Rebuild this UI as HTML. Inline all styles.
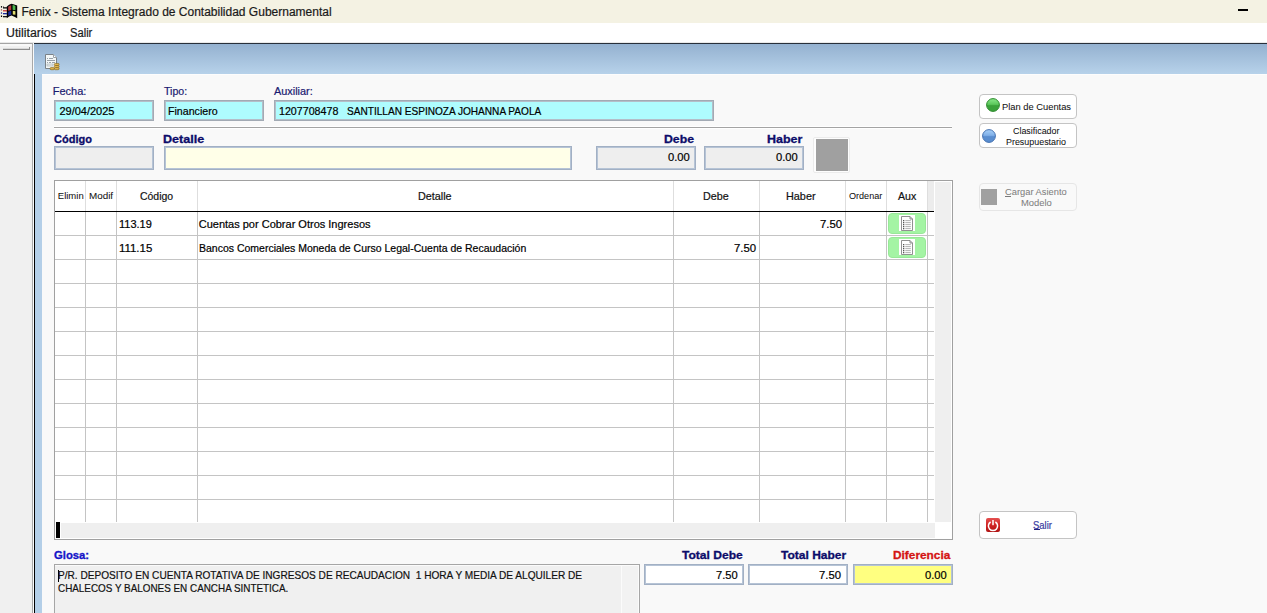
<!DOCTYPE html>
<html><head><meta charset="utf-8">
<style>
*{margin:0;padding:0;box-sizing:border-box}
html,body{width:1267px;height:613px;overflow:hidden;background:#f9f9f9;font-family:"Liberation Sans",sans-serif;color:#000}
.a{position:absolute}
.t{position:absolute;white-space:pre;line-height:1;transform-origin:0 0;-webkit-text-stroke:0.2px currentColor}
svg{position:absolute}
</style></head><body>
<div class="a" style="left:0px;top:0px;width:1267px;height:23px;background:#f4f2e3;"></div>
<div class="a" style="left:0px;top:23px;width:1267px;height:19px;background:#ffffff;"></div>
<div class="a" style="left:0px;top:42px;width:1267px;height:1px;background:#e9e9e9;"></div>
<div class="a" style="left:0px;top:43px;width:32px;height:570px;background:#f0f0f0;"></div>
<div class="a" style="left:0px;top:43px;width:33px;height:1px;background:#a4a4a4;"></div>
<div class="a" style="left:0px;top:44px;width:32px;height:2px;background:#f8f8f8;"></div>
<div class="a" style="left:3px;top:49px;width:27px;height:1px;background:#8c8c8c;"></div>
<div class="a" style="left:3px;top:48px;width:26px;height:1px;background:#d8d8d8;"></div>
<div class="a" style="left:29px;top:47px;width:1px;height:3px;background:#8c8c8c;"></div>
<div class="a" style="left:32px;top:43px;width:1px;height:570px;background:#a8a8a8;"></div>
<div class="a" style="left:33px;top:43px;width:1px;height:570px;background:#fafafa;"></div>
<div class="a" style="left:34px;top:43px;width:1233px;height:31px;background:linear-gradient(#93b0cf,#b7d2ea);"></div>
<div class="a" style="left:34px;top:43px;width:1233px;height:1px;background:#28303a;"></div>
<div class="a" style="left:35px;top:74px;width:7px;height:539px;background:#b4cfe8;"></div>
<div class="a" style="left:34px;top:74px;width:1px;height:539px;background:#000;"></div>
<div class="a" style="left:42px;top:74px;width:1225px;height:539px;background:#f9f9f9;"></div>
<div class="a" style="left:42px;top:74px;width:1225px;height:1px;background:#fdfdfd;"></div>
<div class="a" style="left:1238px;top:9px;width:10px;height:2px;background:#000;"></div>
<div class="a" style="left:54px;top:100px;width:100px;height:21px;background:#aefcfe;border:1px solid #a2aab4;box-shadow:inset 0 0 0 1px #b4bec8"></div>
<div class="a" style="left:164px;top:100px;width:100px;height:21px;background:#aefcfe;border:1px solid #a2aab4;box-shadow:inset 0 0 0 1px #b4bec8"></div>
<div class="a" style="left:274px;top:100px;width:440px;height:21px;background:#aefcfe;border:1px solid #a2aab4;box-shadow:inset 0 0 0 1px #b4bec8"></div>
<div class="a" style="left:54px;top:127px;width:898px;height:1px;background:#a4a4a4;"></div>
<div class="a" style="left:54px;top:128px;width:898px;height:1px;background:#ffffff;"></div>
<div class="a" style="left:54px;top:126px;width:898px;height:1px;background:#ffffff;"></div>
<div class="a" style="left:54px;top:146px;width:100px;height:24px;background:#eeeeee;border:1px solid #a2b0c4;box-shadow:inset 0 0 0 1px #b6c4d6"></div>
<div class="a" style="left:164px;top:146px;width:408px;height:24px;background:#ffffe8;border:1px solid #a2b0c4;box-shadow:inset 0 0 0 1px #b6c4d6"></div>
<div class="a" style="left:596px;top:146px;width:100px;height:24px;background:#eeeeee;border:1px solid #a2b0c4;box-shadow:inset 0 0 0 1px #b6c4d6"></div>
<div class="a" style="left:704px;top:146px;width:100px;height:24px;background:#eeeeee;border:1px solid #a2b0c4;box-shadow:inset 0 0 0 1px #b6c4d6"></div>
<div class="a" style="left:813px;top:137px;width:37px;height:36px;background:#fdfdfd;border:1px solid #ebebeb;border-radius:2px"></div>
<div class="a" style="left:816px;top:139px;width:32px;height:32px;background:#a0a0a0;"></div>
<div class="a" style="left:54px;top:180px;width:899px;height:360px;background:#fff;border:1px solid #a0a0a0"></div>
<div class="a" style="left:85px;top:181px;width:1px;height:30px;background:#dedede;"></div>
<div class="a" style="left:116px;top:181px;width:1px;height:30px;background:#dedede;"></div>
<div class="a" style="left:197px;top:181px;width:1px;height:30px;background:#dedede;"></div>
<div class="a" style="left:673px;top:181px;width:1px;height:30px;background:#dedede;"></div>
<div class="a" style="left:759px;top:181px;width:1px;height:30px;background:#dedede;"></div>
<div class="a" style="left:845px;top:181px;width:1px;height:30px;background:#dedede;"></div>
<div class="a" style="left:886px;top:181px;width:1px;height:30px;background:#dedede;"></div>
<div class="a" style="left:927px;top:181px;width:1px;height:30px;background:#dedede;"></div>
<div class="a" style="left:928px;top:181px;width:6px;height:30px;background:#ececec;"></div>
<div class="a" style="left:55px;top:211px;width:879px;height:1px;background:#000;"></div>
<div class="a" style="left:85px;top:212px;width:1px;height:310px;background:#c4c4c4;"></div>
<div class="a" style="left:116px;top:212px;width:1px;height:310px;background:#c4c4c4;"></div>
<div class="a" style="left:197px;top:212px;width:1px;height:310px;background:#c4c4c4;"></div>
<div class="a" style="left:673px;top:212px;width:1px;height:310px;background:#c4c4c4;"></div>
<div class="a" style="left:759px;top:212px;width:1px;height:310px;background:#c4c4c4;"></div>
<div class="a" style="left:845px;top:212px;width:1px;height:310px;background:#c4c4c4;"></div>
<div class="a" style="left:886px;top:212px;width:1px;height:310px;background:#c4c4c4;"></div>
<div class="a" style="left:927px;top:212px;width:1px;height:310px;background:#c4c4c4;"></div>
<div class="a" style="left:55px;top:235px;width:879px;height:1px;background:#c4c4c4;"></div>
<div class="a" style="left:55px;top:259px;width:879px;height:1px;background:#c4c4c4;"></div>
<div class="a" style="left:55px;top:283px;width:879px;height:1px;background:#c4c4c4;"></div>
<div class="a" style="left:55px;top:307px;width:879px;height:1px;background:#c4c4c4;"></div>
<div class="a" style="left:55px;top:331px;width:879px;height:1px;background:#c4c4c4;"></div>
<div class="a" style="left:55px;top:355px;width:879px;height:1px;background:#c4c4c4;"></div>
<div class="a" style="left:55px;top:379px;width:879px;height:1px;background:#c4c4c4;"></div>
<div class="a" style="left:55px;top:403px;width:879px;height:1px;background:#c4c4c4;"></div>
<div class="a" style="left:55px;top:427px;width:879px;height:1px;background:#c4c4c4;"></div>
<div class="a" style="left:55px;top:451px;width:879px;height:1px;background:#c4c4c4;"></div>
<div class="a" style="left:55px;top:475px;width:879px;height:1px;background:#c4c4c4;"></div>
<div class="a" style="left:55px;top:499px;width:879px;height:1px;background:#c4c4c4;"></div>
<div class="a" style="left:935px;top:182px;width:16px;height:340px;background:#efefef;"></div>
<div class="a" style="left:61px;top:523px;width:874px;height:15px;background:#efefef;"></div>
<div class="a" style="left:56px;top:522px;width:4px;height:16px;background:#000;"></div>
<div class="a" style="left:888px;top:213px;width:38px;height:21px;background:#a4f4a4;border:1px solid #98e898;border-radius:4px"></div>
<div class="a" style="left:899px;top:215px;width:16px;height:16px;background:#ffffff;"></div>
<div class="a" style="left:901px;top:216px;width:12px;height:14px;background:#fff;border:1px solid #707070"></div>
<div class="a" style="left:888px;top:237px;width:38px;height:21px;background:#a4f4a4;border:1px solid #98e898;border-radius:4px"></div>
<div class="a" style="left:899px;top:239px;width:16px;height:16px;background:#ffffff;"></div>
<div class="a" style="left:901px;top:240px;width:12px;height:14px;background:#fff;border:1px solid #707070"></div>
<div class="a" style="left:54px;top:564px;width:586px;height:49px;background:#f0f0f0;border:1px solid #a6a6a6;border-bottom:none"></div>
<div class="a" style="left:55px;top:565px;width:584px;height:1px;background:#fbfbfb;"></div>
<div class="a" style="left:621px;top:565px;width:1px;height:48px;background:#fbfbfb;"></div>
<div class="a" style="left:638px;top:565px;width:1px;height:48px;background:#fbfbfb;"></div>
<div class="a" style="left:622px;top:566px;width:16px;height:47px;background:#f2f2f2;"></div>
<div class="a" style="left:58px;top:570px;width:1px;height:12px;background:#000;"></div>
<div class="a" style="left:644px;top:564px;width:100px;height:21px;background:#ffffff;border:1px solid #a2b0c4;box-shadow:inset 0 0 0 1px #b6c4d6"></div>
<div class="a" style="left:748px;top:564px;width:100px;height:21px;background:#ffffff;border:1px solid #a2b0c4;box-shadow:inset 0 0 0 1px #b6c4d6"></div>
<div class="a" style="left:853px;top:564px;width:100px;height:21px;background:#ffff80;border:1px solid #a2b0c4;box-shadow:inset 0 0 0 1px #b6c4d6"></div>
<div class="a" style="left:979px;top:94px;width:98px;height:25px;background:#fff;border:1px solid #c4c4c4;border-radius:4px"></div>
<div class="a" style="left:979px;top:123px;width:98px;height:25px;background:#fff;border:1px solid #c4c4c4;border-radius:4px"></div>
<div class="a" style="left:979px;top:183px;width:98px;height:28px;background:#f9f9f9;border:1px solid #e6e6e6;border-radius:4px"></div>
<div class="a" style="left:979px;top:511px;width:98px;height:28px;background:#fff;border:1px solid #c4c4c4;border-radius:4px"></div>
<div class="a" style="left:1005px;top:196px;width:6px;height:1px;background:#7a7a7a;"></div>
<div class="a" style="left:981px;top:189px;width:16px;height:16px;background:#a0a0a0;"></div>
<div class="a" style="left:1034px;top:529px;width:6px;height:1px;background:#20207a;"></div>
<svg style="left:0;top:0" width="19" height="20" viewBox="0 0 19 20"><path d="M6.8 6.6 Q9 4.6 11.5 3.8 Q14 4.2 17.2 5.6 L17.2 18.2 Q14.5 16.6 11.5 15.6 Q9 16.4 6.8 18.2 Z" fill="#000"/><path d="M8.2 6.8 Q9.6 5.6 11.2 5.2 L11.2 9.9 Q9.6 10.2 8.2 10.8 Z" fill="#b83a3a"/><path d="M12.6 5.0 Q14 5.2 15.4 5.9 L15.4 10.2 Q14 9.8 12.6 9.8 Z" fill="#4cb84c"/><path d="M8.2 11.8 Q9.6 11.1 11.2 10.8 L11.2 15.0 Q9.6 15.2 8.2 15.8 Z" fill="#1a2a9a"/><path d="M12.8 10.8 Q14 10.9 15.4 11.3 L15.4 14.8 Q14 14.4 12.8 14.4 Z" fill="#e0dc70"/><rect x="0.9" y="6.1" width="1.2" height="1.5" fill="#000"/><rect x="0.9" y="9.3" width="1.2" height="1.2" fill="#a04040"/><rect x="0.9" y="12.3" width="1.2" height="1.5" fill="#2a3aa0"/><rect x="0.9" y="15.5" width="1.2" height="1.5" fill="#000"/><path d="M3 7.2 H7 V8.4 H3 Z M3 7 V6.6 H3.8 V7.2 Z" fill="#000"/><rect x="3" y="10.2" width="4" height="1.2" fill="#c02828"/><rect x="3" y="13" width="4" height="1.3" fill="#1a2a9a"/><rect x="3" y="16.1" width="4" height="1.2" fill="#000"/></svg>
<svg style="left:44px;top:53px" width="18" height="18" viewBox="0 0 18 18"><path d="M1.5 1.5 H9.5 L12.5 4.5 V15.5 H1.5 Z" fill="#f4f8f8" stroke="#7a8288" stroke-width="1"/><path d="M9.5 1.5 V4.5 H12.5" fill="#fff" stroke="#9aa2a8" stroke-width="1"/><g fill="#9aa2a8"><rect x="3" y="5" width="1" height="1"/><rect x="5" y="5" width="4" height="1"/><rect x="3" y="7" width="8" height="1"/><rect x="3" y="9" width="1" height="1"/><rect x="5" y="9" width="2" height="1"/><rect x="8" y="9" width="3" height="1"/></g><rect x="3" y="11" width="6" height="2" fill="#e4ecec" stroke="#a4acb0" stroke-width="0.6"/><g fill="#e2b850" stroke="#8a6a20" stroke-width="0.7"><rect x="10.3" y="10.4" width="4.8" height="2.1" rx="1"/><rect x="10.3" y="12.5" width="4.8" height="2.1" rx="1"/><rect x="10.3" y="14.6" width="4.8" height="2.1" rx="1"/><rect x="6" y="14.6" width="4.3" height="2.1" rx="1"/></g></svg>
<svg style="left:899px;top:215px" width="16" height="16" viewBox="0 0 16 16"><rect x="0" y="0" width="16" height="16" fill="#fff"/><path d="M2.5 1.5 H11 L13.5 4 V15.5 H2.5 Z" fill="#fff" stroke="#858585" stroke-width="0.9"/><path d="M11 1.5 V4 H13.5" fill="none" stroke="#858585" stroke-width="0.9"/><g fill="#555"><rect x="4" y="5" width="1.3" height="1.3"/><rect x="4" y="7" width="1.3" height="1.3"/><rect x="4" y="9" width="1.3" height="1.3"/><rect x="4" y="11" width="1.3" height="1.3"/><rect x="4" y="13" width="1.3" height="1.3"/></g><g fill="#a8a8a8"><rect x="6.3" y="5.2" width="5.5" height="0.9"/><rect x="6.3" y="7.2" width="5.5" height="0.9"/><rect x="6.3" y="9.2" width="5.5" height="0.9"/><rect x="6.3" y="11.2" width="5.5" height="0.9"/><rect x="6.3" y="13.2" width="5.5" height="0.9"/></g></svg>
<svg style="left:899px;top:239px" width="16" height="16" viewBox="0 0 16 16"><rect x="0" y="0" width="16" height="16" fill="#fff"/><path d="M2.5 1.5 H11 L13.5 4 V15.5 H2.5 Z" fill="#fff" stroke="#858585" stroke-width="0.9"/><path d="M11 1.5 V4 H13.5" fill="none" stroke="#858585" stroke-width="0.9"/><g fill="#555"><rect x="4" y="5" width="1.3" height="1.3"/><rect x="4" y="7" width="1.3" height="1.3"/><rect x="4" y="9" width="1.3" height="1.3"/><rect x="4" y="11" width="1.3" height="1.3"/><rect x="4" y="13" width="1.3" height="1.3"/></g><g fill="#a8a8a8"><rect x="6.3" y="5.2" width="5.5" height="0.9"/><rect x="6.3" y="7.2" width="5.5" height="0.9"/><rect x="6.3" y="9.2" width="5.5" height="0.9"/><rect x="6.3" y="11.2" width="5.5" height="0.9"/><rect x="6.3" y="13.2" width="5.5" height="0.9"/></g></svg>
<svg style="left:986px;top:98px" width="14" height="14" viewBox="0 0 14 14"><defs><linearGradient id="g98698" x1="0" y1="0" x2="0" y2="1"><stop offset="0" stop-color="#8ae88a"/><stop offset="0.45" stop-color="#5cc85c"/><stop offset="0.55" stop-color="#3aa23a"/><stop offset="1" stop-color="#3aa23a"/></linearGradient></defs><circle cx="7" cy="7" r="6.4" fill="url(#g98698)" stroke="#2e8a2e" stroke-width="1"/></svg>
<svg style="left:982px;top:129px" width="14" height="14" viewBox="0 0 14 14"><defs><linearGradient id="g982129" x1="0" y1="0" x2="0" y2="1"><stop offset="0" stop-color="#a8d0f8"/><stop offset="0.45" stop-color="#80b0e8"/><stop offset="0.55" stop-color="#5a8ed0"/><stop offset="1" stop-color="#5a8ed0"/></linearGradient></defs><circle cx="7" cy="7" r="6.4" fill="url(#g982129)" stroke="#4672b0" stroke-width="1"/></svg>
<svg style="left:986px;top:518px" width="14" height="14" viewBox="0 0 14 14"><defs><linearGradient id="rp" x1="0" y1="0" x2="0" y2="1"><stop offset="0" stop-color="#e45050"/><stop offset="0.5" stop-color="#d02424"/><stop offset="1" stop-color="#b01414"/></linearGradient></defs><rect x="0" y="0" width="14" height="14" rx="2" fill="url(#rp)"/><path d="M4.6 4.0 A4.6 4.6 0 1 0 9.4 4.0" fill="none" stroke="#fff" stroke-width="1.5"/><rect x="6.25" y="2" width="1.5" height="5.2" fill="#fff"/></svg>
<div class="t" style="left:21.41px;top:6.34px;font-size:12px;color:#1a1a1a;">Fenix - Sistema Integrado de Contabilidad Gubernamental</div>
<div class="t" style="left:5.67px;top:27.34px;font-size:12px;color:#1a1a1a;transform:scaleX(1.0271);">Utilitarios</div>
<div class="t" style="left:69.67px;top:27.34px;font-size:12px;color:#1a1a1a;transform:scaleX(0.9304);">Salir</div>
<div class="t" style="left:52.71px;top:86.19px;font-size:11px;color:#1a1a70;">Fecha:</div>
<div class="t" style="left:164.30px;top:86.19px;font-size:11px;color:#1a1a70;transform:scaleX(0.9652);">Tipo:</div>
<div class="t" style="left:274.00px;top:86.19px;font-size:11px;color:#1a1a70;transform:scaleX(0.9895);">Auxiliar:</div>
<div class="t" style="left:59.40px;top:105.99px;font-size:11px;color:#000;">29/04/2025</div>
<div class="t" style="left:167.53px;top:105.99px;font-size:11px;color:#000;transform:scaleX(0.9660);">Financiero</div>
<div class="t" style="left:278.83px;top:105.99px;font-size:11px;color:#000;transform:scaleX(0.9700);">1207708478</div>
<div class="t" style="left:346.58px;top:105.99px;font-size:11px;color:#000;transform:scaleX(0.9166);">SANTILLAN ESPINOZA JOHANNA PAOLA</div>
<div class="t" style="left:54.00px;top:134.19px;font-size:11px;color:#0c0c6a;font-weight:bold;-webkit-text-stroke:0.3px currentColor;">Código</div>
<div class="t" style="left:162.86px;top:134.19px;font-size:11px;color:#0c0c6a;font-weight:bold;-webkit-text-stroke:0.3px currentColor;transform:scaleX(1.1429);">Detalle</div>
<div class="t" style="left:663.88px;top:134.19px;font-size:11px;color:#0c0c6a;font-weight:bold;-webkit-text-stroke:0.3px currentColor;transform:scaleX(1.1154);">Debe</div>
<div class="t" style="left:766.87px;top:134.19px;font-size:11px;color:#0c0c6a;font-weight:bold;-webkit-text-stroke:0.3px currentColor;transform:scaleX(1.1333);">Haber</div>
<div class="t" style="left:667.60px;top:152.19px;font-size:11px;color:#000;transform:scaleX(1.0190);">0.00</div>
<div class="t" style="left:775.80px;top:152.19px;font-size:11px;color:#000;transform:scaleX(1.0143);">0.00</div>
<div class="t" style="left:57.80px;top:191.46px;font-size:9.5px;color:#111;-webkit-text-stroke:0.05px currentColor;">Elimin</div>
<div class="t" style="left:89.46px;top:191.46px;font-size:9.5px;color:#111;-webkit-text-stroke:0.05px currentColor;transform:scaleX(1.0364);">Modif</div>
<div class="t" style="left:139.75px;top:191.19px;font-size:11px;color:#111;transform:scaleX(0.9500);">Código</div>
<div class="t" style="left:417.72px;top:191.19px;font-size:11px;color:#111;transform:scaleX(0.9818);">Detalle</div>
<div class="t" style="left:702.62px;top:191.19px;font-size:11px;color:#111;transform:scaleX(0.9760);">Debe</div>
<div class="t" style="left:786.41px;top:191.19px;font-size:11px;color:#111;transform:scaleX(0.9862);">Haber</div>
<div class="t" style="left:849.40px;top:191.46px;font-size:9.5px;color:#111;-webkit-text-stroke:0.05px currentColor;transform:scaleX(0.9543);">Ordenar</div>
<div class="t" style="left:897.80px;top:191.19px;font-size:11px;color:#111;transform:scaleX(0.9632);">Aux</div>
<div class="t" style="left:118.99px;top:218.99px;font-size:11px;color:#000;">113.19</div>
<div class="t" style="left:198.71px;top:218.99px;font-size:11px;color:#000;">Cuentas por Cobrar Otros Ingresos</div>
<div class="t" style="left:820.26px;top:218.99px;font-size:11px;color:#000;transform:scaleX(1.0350);">7.50</div>
<div class="t" style="left:118.96px;top:243.19px;font-size:11px;color:#000;transform:scaleX(1.0387);">111.15</div>
<div class="t" style="left:198.75px;top:243.19px;font-size:11px;color:#000;transform:scaleX(0.9541);">Bancos Comerciales Moneda de Curso Legal-Cuenta de Recaudación</div>
<div class="t" style="left:734.47px;top:243.19px;font-size:11px;color:#000;transform:scaleX(1.0350);">7.50</div>
<div class="t" style="left:54.20px;top:550.19px;font-size:11px;color:#1414c8;font-weight:bold;-webkit-text-stroke:0.3px currentColor;transform:scaleX(1.0242);">Glosa:</div>
<div class="t" style="left:57.58px;top:569.99px;font-size:11px;color:#111;transform:scaleX(0.9183);">P/R. DEPOSITO EN CUENTA ROTATIVA DE INGRESOS DE RECAUDACION  1 HORA Y MEDIA DE ALQUILER DE</div>
<div class="t" style="left:57.60px;top:582.99px;font-size:11px;color:#111;transform:scaleX(0.8984);">CHALECOS Y BALONES EN CANCHA SINTETICA.</div>
<div class="t" style="left:681.50px;top:550.19px;font-size:11px;color:#0c0c6a;font-weight:bold;-webkit-text-stroke:0.3px currentColor;transform:scaleX(1.0964);">Total Debe</div>
<div class="t" style="left:780.50px;top:550.19px;font-size:11px;color:#0c0c6a;font-weight:bold;-webkit-text-stroke:0.3px currentColor;transform:scaleX(1.0917);">Total Haber</div>
<div class="t" style="left:892.92px;top:550.19px;font-size:11px;color:#d41414;font-weight:bold;-webkit-text-stroke:0.3px currentColor;transform:scaleX(1.0769);">Diferencia</div>
<div class="t" style="left:715.59px;top:569.99px;font-size:11px;color:#000;transform:scaleX(1.0150);">7.50</div>
<div class="t" style="left:819.48px;top:569.99px;font-size:11px;color:#000;transform:scaleX(1.0250);">7.50</div>
<div class="t" style="left:924.90px;top:569.99px;font-size:11px;color:#000;transform:scaleX(1.0143);">0.00</div>
<div class="t" style="left:1001.52px;top:102.46px;font-size:9.5px;color:#111;-webkit-text-stroke:0.05px currentColor;transform:scaleX(0.9826);">Plan de Cuentas</div>
<div class="t" style="left:1013.40px;top:126.46px;font-size:9.5px;color:#111;-webkit-text-stroke:0.05px currentColor;transform:scaleX(0.9360);">Clasificador</div>
<div class="t" style="left:1005.86px;top:136.96px;font-size:9.5px;color:#111;-webkit-text-stroke:0.05px currentColor;transform:scaleX(0.9381);">Presupuestario</div>
<div class="t" style="left:1005.20px;top:187.46px;font-size:9.5px;color:#808080;-webkit-text-stroke:0.05px currentColor;transform:scaleX(0.9825);">Cargar Asiento</div>
<div class="t" style="left:1020.61px;top:198.46px;font-size:9.5px;color:#808080;-webkit-text-stroke:0.05px currentColor;transform:scaleX(0.9900);">Modelo</div>
<div class="t" style="left:1033.10px;top:519.61px;font-size:10.5px;color:#3a3aa0;transform:scaleX(0.9000);">Salir</div>
</body></html>
